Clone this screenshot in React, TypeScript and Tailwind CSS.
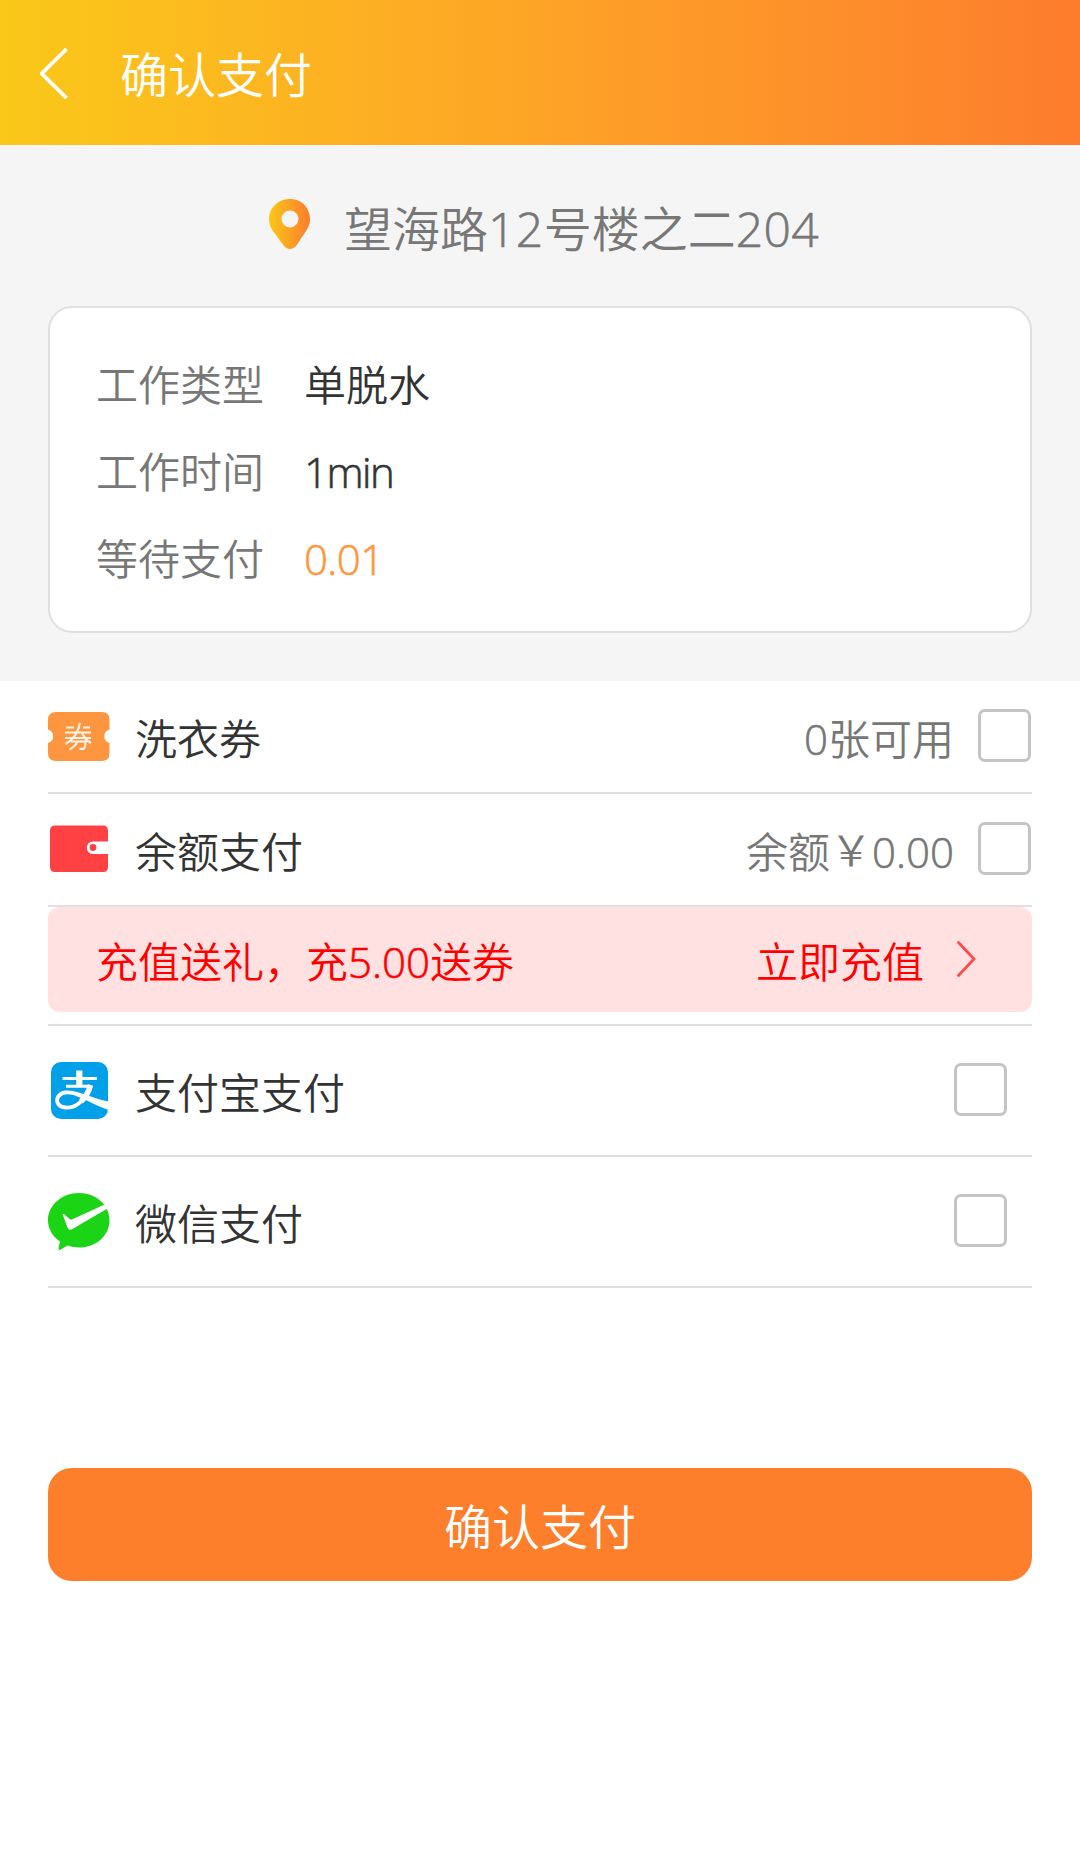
import type { ReactNode } from "react";

function BackIcon() {
  return (
    <svg width="30" height="52" viewBox="0 0 30 52" fill="none" stroke="#fff" strokeWidth="3.8">
      <path d="M26.500 2 L1.800 26.500 L26.500 51" />
    </svg>
  );
}

function PinIcon() {
  return (
    <svg width="42" height="51" viewBox="0 0 42 51" className="mb-0.5">
      <defs>
        <linearGradient id="pin" x1="0" x2="1" y1="0" y2="0">
          <stop offset="0" stopColor="#fac81a" />
          <stop offset="1" stopColor="#fd7c2c" />
        </linearGradient>
      </defs>
      <path
        fill="url(#pin)"
        fillRule="evenodd"
        d="M21 0C9.500 0 0 8.500 0 20.500C0 26 2.500 30 5 33.500L15 47C18.500 51 23.500 51 27 47L36 33.500C38.500 30 41 26 41 20.500C41 8.500 32.500 0 21 0ZM21 11.500A8.500 8.500 0 1 1 21 28.500A8.500 8.500 0 1 1 21 11.500Z"
      />
    </svg>
  );
}

function CouponIcon() {
  return (
    <svg width="62" height="49" viewBox="0 0 62 49">
      <path
        fill="#fe963f"
        d="M8 0H54Q61.500 0 61.500 8V17.500A7 7 0 0 0 61.500 31V41Q61.500 49 54 49H8Q0 49 0 41V31A7 7 0 0 0 0 17.500V8Q0 0 8 0Z"
      />
      <g fill="none" stroke="#fff3e8" strokeWidth="2.200">
        <path d="M18 15.500H26M35 15.500H42M17 20.500H43M17 26H43M32 11Q29 26 17.500 32M34 20.500Q37 28 43 31M23 29.500H37.500Q37.500 36.500 35 36.800H31.500M29.500 29Q28 34 21.500 37.500" />
      </g>
    </svg>
  );
}

function WalletIcon() {
  return (
    <svg width="62" height="48" viewBox="0 0 62 48" className="mb-0.5">
      <path
        fill="#ff4143"
        d="M7 .5H55Q60 .5 60 6V16.500H45A6.200 6.200 0 0 0 45 29H60V42Q60 47 55 47H7Q2 47 2 42V6Q2 .5 7 .5Z"
      />
      <circle cx="45" cy="22.500" r="3.400" fill="#ff4143" />
    </svg>
  );
}

function AlipayIcon() {
  return (
    <svg width="62" height="57" viewBox="-3 0 62 57">
      <rect width="57" height="57" rx="10" fill="#02a0e9" />
      <g fill="none" stroke="#fff">
        <path strokeWidth="6.200" d="M28.300 8.500V24" />
        <path strokeWidth="3" d="M11.500 16.500H46M15 24.300H39" />
        <path strokeWidth="5.500" d="M39.500 23Q37 33 30 39.500" />
        <path
          strokeWidth="3.800"
          d="M31 38.500C25 45 19 46 14.500 45.500C7.500 45 5 40 6.500 36C9 29.500 18 29 27 32.500"
        />
      </g>
      <path fill="#fff" d="M24 29.500C34 32 45 37 57 39.500V47.800C46 44 37 38.500 25 34Z" />
    </svg>
  );
}

function WechatIcon() {
  return (
    <svg width="62" height="57" viewBox="0 0 62 57">
      <path
        fill="#1ad415"
        d="M31 0C48 0 61.500 12 61.500 27.200C61.500 42.500 48 54.500 31 54.500C27 54.500 23 53.800 19.500 52.500L12 57Q10 57 10.500 55L12 48.500C4.500 43.500 0 36 0 27.200C0 12 14 0 31 0Z"
      />
      <path
        fill="#fff"
        d="M14.500 21Q15.500 20 17.500 22.500L21.500 26Q23 27 25 26L56.500 11.500L59.500 15.500L24.500 36Q21 38 19.500 34.500Z"
      />
    </svg>
  );
}

function ChevronIcon() {
  return (
    <svg width="19" height="36" viewBox="0 0 19 36" fill="none" stroke="#ff4a4c" strokeWidth="2.800" className="mb-0.5">
      <path d="M1.500 1.500L17 18L1.500 34.500" strokeLinecap="round" />
    </svg>
  );
}

function Checkbox() {
  return (
    <span
      role="checkbox"
      aria-checked="false"
      className="mr-px mb-0.5 size-[53px] shrink-0 rounded-[7px] border-3 border-[#c4c4c4]"
    />
  );
}

/* Latin letters and digits, set in a humanist face on the Chinese baseline. */
function Latin({ children }: { children: ReactNode }) {
  return <span className="font-['Open_Sans',sans-serif] leading-none [-webkit-text-stroke:0.6px]">{children}</span>;
}

function DetailRow({ label, children }: { label: string; children: ReactNode }) {
  return (
    <div className="flex h-[87px] items-center">
      <span className="w-[208px] text-[#777]">{label}</span>
      {children}
    </div>
  );
}

function PayRow({ icon, label, note, roomy }: { icon: ReactNode; label: string; note?: ReactNode; roomy?: boolean }) {
  return (
    <div
      className={
        roomy
          ? "flex h-[131px] items-center border-b-2 border-[#e0e0e0] pr-6"
          : "flex h-[113px] items-center border-b-2 border-[#e0e0e0]"
      }
    >
      {icon}
      <span className="ml-[25px] flex-1 text-[#333]">{label}</span>
      {note && <span className="mr-6 text-[#777]">{note}</span>}
      <Checkbox />
    </div>
  );
}

export default function App() {
  return (
    <div className="min-h-[1867px] w-[1080px] bg-white font-['Noto_Sans_CJK_SC',sans-serif] text-[42px] leading-[60px] font-[350] whitespace-nowrap">
      <header className="flex h-[145px] items-center bg-linear-to-r from-[#fac818] to-[#fd7c2d] pt-px pl-10 text-white">
        <BackIcon />
        <h1 className="ml-[50px] pb-0.5 text-5xl leading-[60px] font-[350]">确认支付</h1>
      </header>

      <section className="h-[536px] bg-[#f5f5f5] px-12">
        <div className="flex h-[161px] items-center pl-[221px]">
          <PinIcon />
          <span className="ml-[33px] text-5xl leading-[60px] text-[#777]">
            望海路
            <span className="tracking-[0.4px]">
              <Latin>12</Latin>
            </span>
            号楼之二
            <span className="tracking-[0.4px]">
              <Latin>204</Latin>
            </span>
          </span>
        </div>
        <div className="h-[327px] rounded-3xl border-2 border-[#e0e0e0] bg-white px-[46px] pt-[31px]">
          <DetailRow label="工作类型">
            <span className="text-[#333]">单脱水</span>
          </DetailRow>
          <DetailRow label="工作时间">
            <span className="tracking-[-1.5px] text-[#333]">
              <Latin>1min</Latin>
            </span>
          </DetailRow>
          <DetailRow label="等待支付">
            <span className="tracking-[-0.6px] text-[#fe963f]">
              <Latin>0.01</Latin>
            </span>
          </DetailRow>
        </div>
      </section>

      <main className="px-12">
        <PayRow
          icon={<CouponIcon />}
          label="洗衣券"
          note={
            <>
              <Latin>0</Latin>张可用
            </>
          }
        />
        <PayRow
          icon={<WalletIcon />}
          label="余额支付"
          note={
            <>
              余额<span className="align-[2px] leading-none">￥</span>
              <Latin>0.00</Latin>
            </>
          }
        />
        <div className="border-b-2 border-[#e0e0e0] pb-3">
          <div className="flex h-[105px] items-center rounded-xl bg-[#ffe1e2] pr-14 pl-12 text-[#f00]">
            <span className="flex-1">
              充值送礼，充<Latin>5.00</Latin>送券
            </span>
            <span className="mr-[33px]">立即充值</span>
            <ChevronIcon />
          </div>
        </div>
        <PayRow icon={<AlipayIcon />} label="支付宝支付" roomy />
        <PayRow icon={<WechatIcon />} label="微信支付" roomy />
        <button className="mt-[180px] flex h-[113px] w-full items-center justify-center rounded-3xl bg-[#fd7f2c] pb-0.5 text-5xl font-[350] text-white">
          确认支付
        </button>
      </main>
    </div>
  );
}
